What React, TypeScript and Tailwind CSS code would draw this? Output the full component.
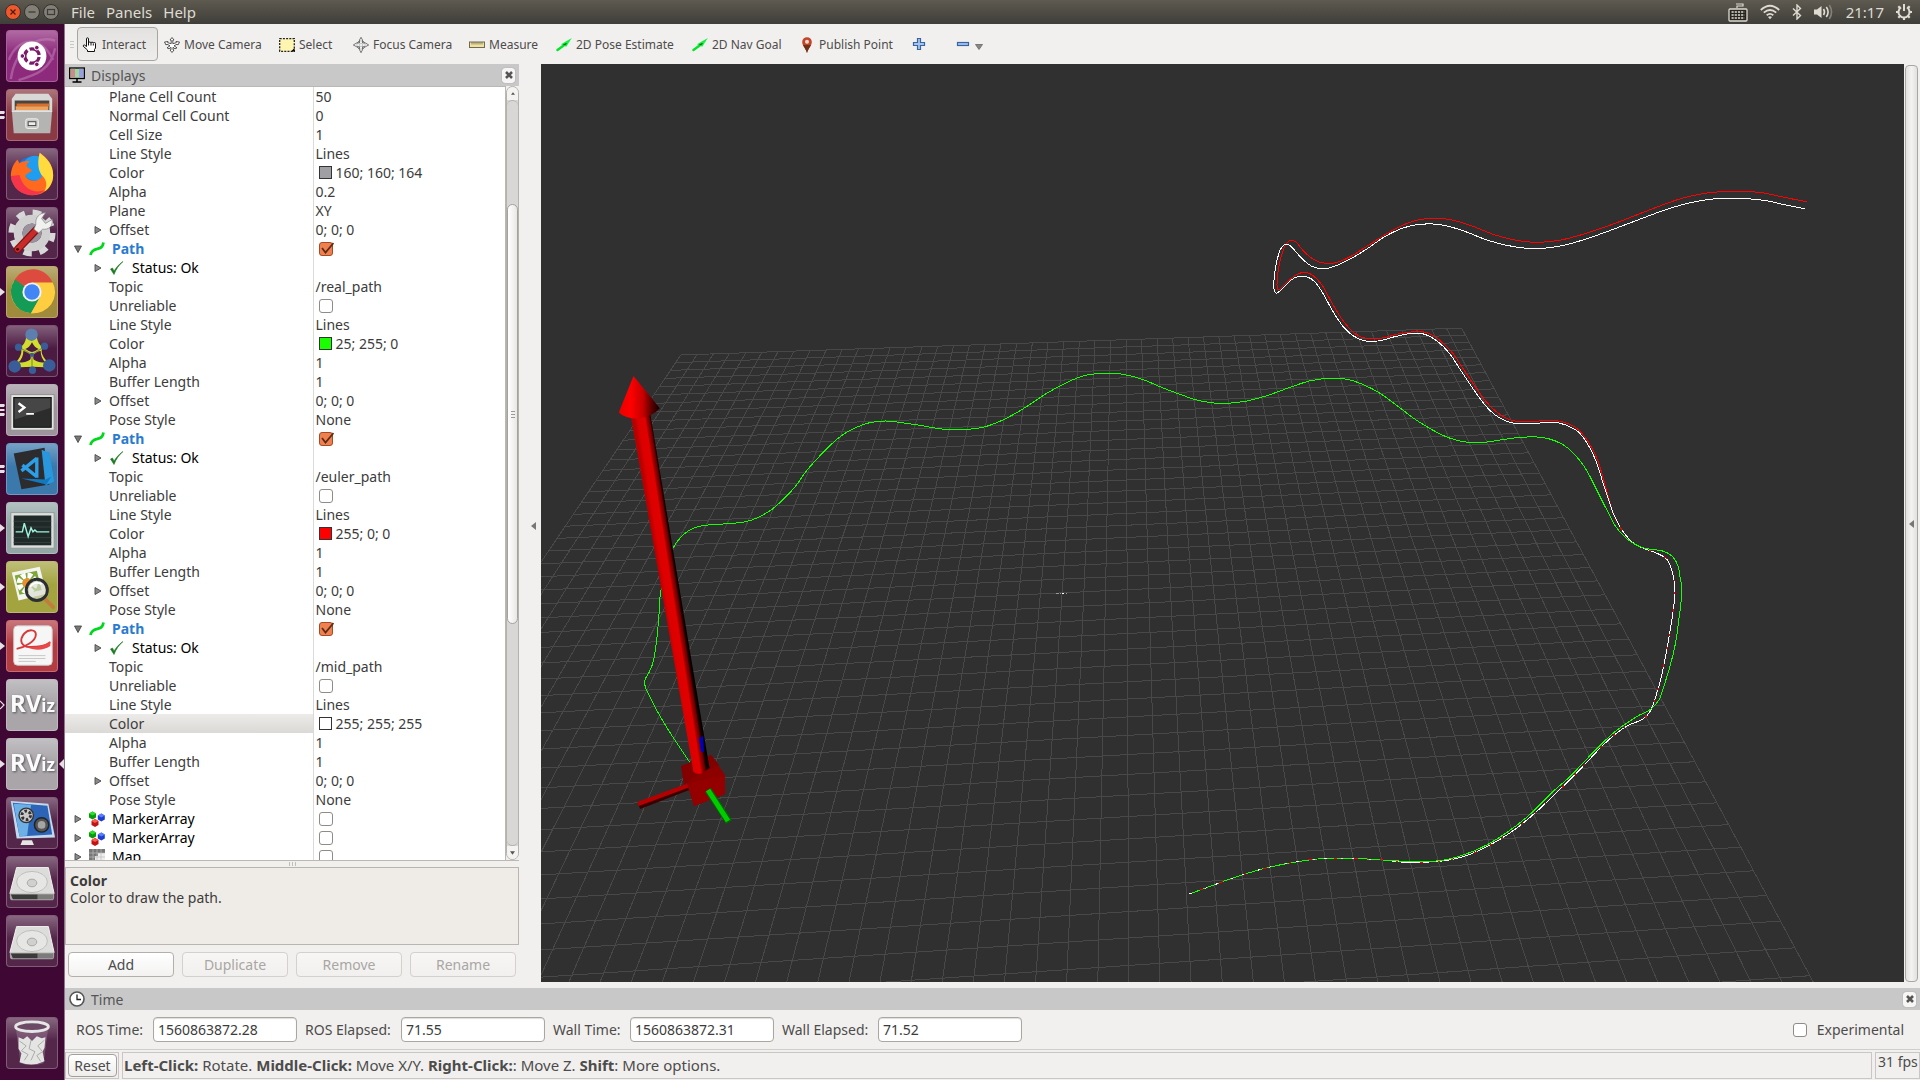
import React, { useId } from "react";

/* ------------------------------------------------------------------ */
/* Launcher artwork                                                     */
/* ------------------------------------------------------------------ */

function DashArt() {
  return (
    <>
      <path d="M4 50C8 20 30 4 50 10M2 30C10 8 34 2 48 30M12 51C30 46 46 40 50 18" stroke="#c287b9" strokeOpacity=".5" strokeWidth="2.5" fill="none" />
      <circle cx="26" cy="26" r="15" fill="#fff" />
      <circle cx="26" cy="26" r="7.5" fill="none" stroke="#7b1c6b" strokeWidth="3.4" strokeDasharray="13.2 2.5" strokeDashoffset="-1.2" />
      <circle cx="16" cy="26" r="2.4" fill="#7b1c6b" stroke="#fff" />
      <circle cx="31" cy="17.3" r="2.4" fill="#7b1c6b" stroke="#fff" />
      <circle cx="31" cy="34.7" r="2.4" fill="#7b1c6b" stroke="#fff" />
    </>
  );
}

function FilesArt() {
  return (
    <>
      <path d="M9 4h34l4 5v12H5V9z" fill="#d8d8d6" />
      <path d="M8 11h36v12H8z" fill="#4a4543" />
      <path d="M10 14h34v3H10z" fill="#d8702a" />
      <path d="M9 17h34v6H9z" fill="#f0a25c" />
      <path d="M5 21h42l-2 24H7z" fill="#b4b4b2" />
      <path d="M5 21h42v2H5z" fill="#e2e2e0" />
      <rect x="19.500" y="30" width="13" height="10" rx="2" fill="#c8c8c6" stroke="#f2f2f2" />
      <rect x="22" y="33" width="8" height="4" fill="#eee" stroke="#444" />
    </>
  );
}

function FirefoxArt() {
  return (
    <>
      <circle cx="26" cy="26" r="18" fill="#1b74d8" />
      <circle cx="29" cy="20" r="13" fill="#1f9df0" />
      <path d="M34 4c7 5 14 12 14 23 0 12-9 21-21 21S5 40 4 28c0-7 3-13 7-17l2 4c3-2 7-3 11-2-4 2-5 5-1 7l3 2c-2 3-6 3-7 6 3 5 11 8 17 1 2-8-4-13-2-25z" fill="#ff6a1f" />
      <path d="M34 4c8 6 14 13 14 23 0 8-4 14-9 17 4-8 1-13-3-17-3-4-5-12-2-23z" fill="#ffdb3d" />
      <path d="M4 28c1 12 11 20 22 20 5 0 10-2 13-5-12 4-23-3-26-16z" fill="#f3245a" fillOpacity=".75" />
    </>
  );
}

function SettingsArt() {
  return (
    <>
      <circle cx="26" cy="26" r="21" fill="none" stroke="#d8d8d8" strokeWidth="7" strokeDasharray="8.500 8" />
      <circle cx="26" cy="26" r="14.500" fill="none" stroke="#d0d0d0" strokeWidth="9" />
      <circle cx="26" cy="26" r="10" fill="#9a929c" />
      <path d="M33 20L11 43" stroke="#7d1414" strokeWidth="8" strokeLinecap="round" />
      <path d="M33 20L11 43" stroke="#c92b2b" strokeWidth="5.500" strokeLinecap="round" />
      <path d="M30 17c-1-7 4-12 10-12l-4 6 4 5 7-4c1 7-4 11-10 10l-4 4-5-4z" fill="#f1f1ef" stroke="#8a8a8a" strokeWidth=".8" />
      <circle cx="11" cy="43" r="1.500" fill="#3c0909" />
    </>
  );
}

function ChromeArt() {
  return (
    <>
      <circle cx="26" cy="26" r="22" fill="#fcc934" />
      <path d="M26 26L7 15A22 22 0 0 1 48 18H28z" fill="#dd4b3e" />
      <path d="M26 26L8.500 13A22 22 0 0 0 25 48L35 31z" fill="#149c57" />
      <path d="M26 16h21.500A22 22 0 0 1 25 48l9.500-17z" fill="#ffcd40" />
      <circle cx="26" cy="26" r="10" fill="#f2f2f2" />
      <circle cx="26" cy="26" r="8" fill="#4285f4" />
    </>
  );
}

function NodesArt() {
  return (
    <>
      <path d="M20 12h11c1 5 3 8 6 10-2 4-1 9 5 15l-2 6c-9-1-18-1-27 0l-3-6c5-6 6-11 4-15 3-2 5-5 6-10z" fill="#d2de2c" />
      <path d="M26 17c-2 4-4 6-7 7 2 1 4 3 7 3s5-2 7-3c-3-1-5-3-7-7zM17 26c0 5-2 9-5 12 5 0 9-1 12-3 1-1 1-4 0-6-2-2-4-3-7-3zM35 26c0 5 2 9 5 12-5 0-9-1-12-3-1-1-1-4 0-6 2-2 4-3 7-3z" fill="#4c1b42" />
      <path d="M14 23l12 7 12-8M26 30v14" stroke="#8b9440" strokeWidth="1.300" fill="none" />
      <g fill="#3a5c98">
        <circle cx="25.500" cy="9" r="6.500" fill="#5d7fae" />
        <circle cx="8" cy="42" r="6.500" />
        <circle cx="44" cy="41" r="6.500" />
        <circle cx="12" cy="22" r="3.800" />
        <circle cx="39" cy="21" r="3.800" />
        <circle cx="26" cy="30" r="2.200" />
        <circle cx="26.500" cy="46" r="3.800" />
      </g>
    </>
  );
}

function TerminalArt() {
  return (
    <>
      <rect x="4" y="10" width="45" height="37" fill="#e4e4e2" stroke="#8f8f8c" />
      <rect x="7" y="13" width="39" height="31" fill="#2c2c2c" stroke="#111" />
      <path d="M8 14h37v10L8 36z" fill="#464646" />
      <path d="M12 19l6 4.500-6 4.500" fill="none" stroke="#fff" strokeWidth="2.500" />
      <path d="M20 30h8" stroke="#fff" strokeWidth="2" />
    </>
  );
}

function CodeArt() {
  return (
    <>
      <path d="M36 7l8 2 5 30-8 4-26-3 21 1z" fill="#1f8ad2" />
      <path d="M7 10l32-6 5 38-29 5z" fill="#2c2c2e" />
      <path d="M36 6l8 3 5 30-9 4z" fill="#2a97dd" />
      <path d="M31 14v21M31 15L15 28M31 34L16 22" stroke="#2c9fe8" strokeWidth="3.500" fill="none" />
      <path d="M15 36l25 1 6-3-5 8z" fill="#1279bf" />
    </>
  );
}

function MonitorArt() {
  return (
    <>
      <rect x="4" y="10" width="45" height="37" fill="#dededc" stroke="#8f9a98" />
      <rect x="7" y="13" width="39" height="31" fill="#1f2a28" />
      <path d="M7 19h39M7 25h39M7 36h39M7 41h39" stroke="#33413e" />
      <path d="M9 30h7l2-9 4 14 3-9 2 4 2-2 2 2h13" fill="none" stroke="#9ff3dd" strokeWidth="1.500" />
    </>
  );
}

function ViewerArt() {
  return (
    <>
      <path d="M5 11l29-6 7 28-29 7z" fill="#f4f4f0" />
      <path d="M8 14l23-5 5 20-23 5z" fill="#7fa83a" />
      <circle cx="21" cy="22" r="8" fill="none" stroke="#fff" strokeWidth="6" strokeDasharray="4.500 1.800" />
      <circle cx="21" cy="22" r="5" fill="#e9902a" />
      <path d="M39 38l9 9" stroke="#c07d3c" strokeWidth="4" strokeLinecap="round" />
      <circle cx="31" cy="29" r="11" fill="#d9dccf" fillOpacity=".65" stroke="#2b2e33" strokeWidth="3" />
      <path d="M24 26c2-4 7-6 12-3" stroke="#fff" strokeWidth="2" fill="none" />
    </>
  );
}

function DocumentArt() {
  return (
    <>
      <rect x="7" y="5" width="40" height="41" rx="4" fill="#f6f6f6" stroke="#ccc" />
      <path d="M10 29c9-2 20-8 20-15 0-5-7-6-12-1-6 7-3 14 6 14 8 0 16-1 21-5" fill="none" stroke="#d83a3a" strokeWidth="2" />
      <path d="M20 27c10 1 18-1 25-6v5c-8 5-16 5-25 1z" fill="#e8484a" />
      <path d="M12 36h28M12 39h28M12 42h18" stroke="#c6c6c6" />
    </>
  );
}

function RvizArt() {
  return (
    <text x="3" y="33" fill="#fbfbfb" className="font-bold [filter:drop-shadow(1px_1px_1px_#555)]">
      <tspan fontSize="25">RV</tspan>
      <tspan fontSize="18">iz</tspan>
    </text>
  );
}

function DisplayArt() {
  return (
    <>
      <path d="M4 3l39 3 7 35-40 1z" fill="#c6d9ec" />
      <path d="M6 5l36 3 5 30-34 2z" fill="#2c64b8" />
      <path d="M7 6l18 1-4 32-8 1z" fill="#6db0e6" />
      <circle cx="20" cy="18" r="7.500" fill="#c9c9c9" stroke="#333" strokeWidth="1.500" />
      <circle cx="20" cy="18" r="4.500" fill="none" stroke="#333" strokeWidth="3" strokeDasharray="2.700 2" />
      <circle cx="36" cy="28" r="7.500" fill="#555" stroke="#222" strokeWidth="1.500" />
      <circle cx="36" cy="28" r="4" fill="#a5a5a5" />
      <path d="M16 44h10l2 5H14z" fill="#e5e5e3" />
    </>
  );
}

function DiskArt() {
  return (
    <>
      <path d="M10 11h33l6 27H3z" fill="#dcdcda" stroke="#f4f4f4" />
      <ellipse cx="26" cy="26" rx="16" ry="11" fill="#e6e6e4" stroke="#bdbdbb" />
      <ellipse cx="26" cy="27" rx="5" ry="4" fill="#d0d0ce" stroke="#a5a5a3" />
      <path d="M3 38h46v4q0 3-3 3H6q-3 0-3-3z" fill="#a5a5a3" />
      <path d="M4 39h28v5H6z" fill="#3a3a3a" />
      <path d="M32 39h16v5H32z" fill="#7b7b79" />
    </>
  );
}

function TrashArt() {
  return (
    <>
      <path d="M9 9h34l-5 38q-12 4-24 0z" fill="#9d8199" fillOpacity=".45" />
      <path d="M12 20l5 2 4-3 5 5 5-5 5 2 4-1-1 11-2 4 2 10q-12 6-26 1l2-9-3-5z" fill="#e4e4e2" />
      <path d="M13 24l7 5-5 5 7 4-4 6M25 23l-2 9 6 3-4 9M39 23l-7 6 5 6-6 4 4 6" stroke="#a9a9a7" fill="none" />
      <ellipse cx="26" cy="9" rx="17" ry="5" fill="#6b4b66" stroke="#e6e6e6" strokeWidth="3" />
    </>
  );
}

type Marks = "none" | "one" | "two" | "three" | "hollow";
const launcher: { name: string; tile: string; art: () => React.JSX.Element; marks: Marks; active?: boolean }[] = [
  { name: "Dash", tile: "bg-[#8e2a7c]", art: DashArt, marks: "none" },
  { name: "Files", tile: "bg-[#8a3a44]", art: FilesArt, marks: "two" },
  { name: "Firefox", tile: "bg-[#54264a]", art: FirefoxArt, marks: "none" },
  { name: "System Settings", tile: "bg-[#54264a]", art: SettingsArt, marks: "none" },
  { name: "Chrome", tile: "bg-[#a08a3c]", art: ChromeArt, marks: "one" },
  { name: "Node Graph", tile: "bg-[#4c1b42]", art: NodesArt, marks: "none" },
  { name: "Terminal", tile: "bg-[#9d949d]", art: TerminalArt, marks: "three" },
  { name: "Code", tile: "bg-[#3b78ac]", art: CodeArt, marks: "two" },
  { name: "System Monitor", tile: "bg-[#93a6a6]", art: MonitorArt, marks: "one" },
  { name: "Image Viewer", tile: "bg-[#a3a440]", art: ViewerArt, marks: "one" },
  { name: "Document Viewer", tile: "bg-[#b23c42]", art: DocumentArt, marks: "one" },
  { name: "RViz", tile: "bg-[#a9a5a9]", art: RvizArt, marks: "hollow" },
  { name: "RViz session", tile: "bg-[#a9a5a9]", art: RvizArt, marks: "one", active: true },
  { name: "Screen Recorder", tile: "bg-[#54264a]", art: DisplayArt, marks: "none" },
  { name: "Disk 1", tile: "bg-[#54264a]", art: DiskArt, marks: "none" },
  { name: "Disk 2", tile: "bg-[#54264a]", art: DiskArt, marks: "none" },
];

function RunMarks({ kind }: { kind: Marks }) {
  if (kind === "none") return null;
  return (
    <svg viewBox="0 0 6 16" className="h-4 w-[6px]" fill="#e6e0e4">
      {kind === "one" && <path d="M0 4l5 4-5 4z" />}
      {kind === "hollow" && <path d="M0 4l4 4-4 4" fill="none" stroke="#e6e0e4" strokeWidth="1.200" />}
      {kind === "two" && <path d="M0 4h4l1 1-1 2H0zM0 9h4l1 1-1 2H0z" />}
      {kind === "three" && <path d="M0 2h4l1 1-1 2H0zM0 7h4l1 1-1 1H0zM0 11h4l1 1-1 2H0z" />}
    </svg>
  );
}

function Tile({ name, tile, Art }: { name: string; tile: string; Art: () => React.JSX.Element }) {
  return (
    <button aria-label={name} className={`size-[52px] shrink-0 overflow-hidden rounded border border-white/25 ${tile}`}>
      <svg viewBox="0 0 52 52" className="block size-full bg-linear-to-b from-white/30 to-transparent to-45%">
        <Art />
      </svg>
    </button>
  );
}

function Launcher() {
  return (
    <nav aria-label="Launcher" className="flex w-[65px] shrink-0 flex-col justify-between border-r border-[#8f7589] bg-[#3f0733] pt-[6px] pb-[6px]">
      <ul className="flex flex-col gap-[7px]">
        {launcher.map(({ name, tile, art, marks, active }) => (
          <li key={name} className="flex h-[52px] items-center">
            <span className="w-[6px] shrink-0">
              <RunMarks kind={marks} />
            </span>
            <Tile name={name} tile={tile} Art={art} />
            <span className="w-[6px] shrink-0">
              {active && (
                <svg viewBox="0 0 6 10" className="h-[10px] w-[6px]">
                  <path d="M6 0v10L1 5z" fill="#e6e0e4" />
                </svg>
              )}
            </span>
          </li>
        ))}
      </ul>
      <div className="pl-[6px]">
        <Tile name="Trash" tile="bg-[#54264a]" Art={TrashArt} />
      </div>
    </nav>
  );
}

/* ------------------------------------------------------------------ */
/* Top bar                                                              */
/* ------------------------------------------------------------------ */

function TopBar() {
  return (
    <header className="flex h-6 shrink-0 items-center justify-between bg-linear-to-b from-[#5e5a50] to-[#3f3e39] pr-2 pl-[5px] text-[15px] leading-6 text-[#dfdbd2]">
      <div className="flex items-center">
        <div className="flex gap-[3px]">
          <button aria-label="Close window" className="size-4">
            <svg viewBox="0 0 16 16">
              <circle cx="8" cy="8" r="7.500" fill="#f0582c" stroke="#35332e" />
              <path d="M5.500 5.500l5 5m0-5l-5 5" stroke="#4b1d10" strokeWidth="1.300" />
            </svg>
          </button>
          <button aria-label="Minimize window" className="size-4">
            <svg viewBox="0 0 16 16">
              <circle cx="8" cy="8" r="7.500" fill="#827f77" stroke="#35332e" />
              <path d="M4.500 8h7" stroke="#3c3b37" strokeWidth="1.300" />
            </svg>
          </button>
          <button aria-label="Restore window" className="size-4">
            <svg viewBox="0 0 16 16">
              <circle cx="8" cy="8" r="7.500" fill="#827f77" stroke="#35332e" />
              <rect x="4.500" y="5.500" width="7" height="5" fill="none" stroke="#3c3b37" strokeWidth="1.200" />
            </svg>
          </button>
        </div>
        <div className="ml-3 flex gap-[11px]">
          <button>File</button>
          <button>Panels</button>
          <button>Help</button>
        </div>
      </div>
      <div className="flex items-center">
        <svg viewBox="0 0 20 20" className="mr-3 size-5">
          <path d="M9 6V4h6V2H8" fill="none" stroke="#dfdbd2" strokeWidth="1.200" />
          <rect x="1" y="7" width="18" height="12" rx="1" fill="#26251f" stroke="#dfdbd2" strokeWidth="1.300" />
          <path d="M3.500 10h13M3.500 13h13M3.500 16h13" stroke="#dfdbd2" strokeWidth="1.700" strokeDasharray="2.200 1" />
        </svg>
        <svg viewBox="0 0 20 16" className="mr-3 h-4 w-5" fill="none" stroke="#dfdbd2" strokeWidth="1.800">
          <path d="M.8 6Q10-2.500 19.200 6M3.800 8.700q6.200-5.500 12.400 0M6.700 11.300q3.300-2.800 6.600 0" />
          <path d="M8 13q2-1.500 4 0l-2 2.200z" fill="#dfdbd2" stroke="none" />
        </svg>
        <svg viewBox="0 0 10 16" className="mr-3 h-4 w-[10px]" fill="none" stroke="#dfdbd2" strokeWidth="1.400">
          <path d="M1 4.500l7.500 7L5 15V1l3.500 3.500L1 11.500" />
        </svg>
        <svg viewBox="0 0 20 16" className="mr-3 h-4 w-5" fill="none" stroke="#dfdbd2" strokeWidth="1.600">
          <path d="M0 5.500h3L7.500 2v12L3 10.500H0z" fill="#dfdbd2" stroke="none" />
          <path d="M9.500 5q2 3 0 6M12.300 3q3.600 5 0 10" />
          <path d="M15.300 1q4.500 7 0 14" stroke="#85827b" />
        </svg>
        <span className="mr-3">21:17</span>
        <svg viewBox="0 0 16 16" className="size-4" fill="none" stroke="#dfdbd2">
          <path d="M11 3.400A5.500 5.500 0 1 1 5 3.400" strokeWidth="2" />
          <path d="M8 0v7" strokeWidth="2" />
          <path d="M8 13.500v2.500M0 8h2.500M13.500 8H16M2.300 2.300l2 2M13.700 2.300l-2 2M2.300 13.700l2-2M13.700 13.700l-2-2" strokeWidth="2.200" />
        </svg>
      </div>
    </header>
  );
}

/* ------------------------------------------------------------------ */
/* Tool bar                                                             */
/* ------------------------------------------------------------------ */

const HandIcon = () => (
  <svg viewBox="0 0 16 16" className="size-4 shrink-0">
    <path d="M4.500 9.500V1.800q0-1 1-1t1 1V6q0-1 1.200-1t1.200 1q0-.8 1.200-.8t1.200.9q0-.6 1.100-.6t1.100 1v4.500l-1 1.500v2H5.500v-1.500L1.200 9.200q0-1.500 1.300-1.200z" fill="#fff" stroke="#111" />
    <path d="M6.500 6v2.500M9 6v2.500M11.300 6.500v2" stroke="#111" />
  </svg>
);
const MoveIcon = () => (
  <svg viewBox="0 0 16 16" className="size-4 shrink-0" fill="#fff" stroke="#444" strokeWidth=".9">
    <path d="M8 .5l2 2.500-1.200.2v3.500l3.500-1-.3-1.200L15.500 5l-1.500 3-1-.8-3 1.600 3 2-2 1-2-1.500v2.500l1 .2-2 2.500-2-2.500 1-.2v-2.500l-2 1.500-2-1 3-2L3 7.200l-1 .8L.5 5 4 4.500l-.3 1.200 3.500 1V3.200L6 3z" />
  </svg>
);
const SelectIcon = () => (
  <svg viewBox="0 0 16 16" className="size-4 shrink-0">
    <rect x=".7" y="1.700" width="14.600" height="12.600" fill="#fdf5b0" stroke="#222" strokeWidth="1.300" strokeDasharray="2 1.200" />
    <path d="M15.500 11v3.500H12z" fill="#000" />
  </svg>
);
const FocusIcon = () => (
  <svg viewBox="0 0 16 16" className="size-4 shrink-0" fill="none" stroke="#666">
    <circle cx="8" cy="8" r="4.200" fill="#ddd" />
    <circle cx="8" cy="8" r="1.500" fill="#fff" />
    <path d="M8 .3L9.500 3v3h3L15.700 8l-3.200 1.700h-3v3L8 15.700l-1.500-3v-3h-3L.3 8l3.200-2h3V3z" strokeWidth=".9" fill="#fff" fillOpacity=".6" />
  </svg>
);
const RulerIcon = () => (
  <svg viewBox="0 0 16 16" className="size-4 shrink-0">
    <rect x=".5" y="5" width="15" height="5.500" fill="#f0e2a0" stroke="#6f6a50" />
    <path d="M3 5v2.500M5 5v2.500M7 5v2.500M9 5v2.500M11 5v2.500M13 5v2.500" stroke="#6f6a50" strokeWidth=".8" />
  </svg>
);
const ArrowIcon = () => (
  <svg viewBox="0 0 16 16" className="size-4 shrink-0">
    <path d="M1.500 13L9 7.500" stroke="#00e52a" strokeWidth="2.400" strokeLinecap="round" />
    <path d="M15.800 1L5 7.200l5.200 2.600z" fill="#0cf53c" />
    <path d="M7.500 8l3-1.500" stroke="#064d10" strokeWidth="1.300" />
  </svg>
);
const PinIcon = () => (
  <svg viewBox="0 0 16 16" className="size-4 shrink-0">
    <path d="M8 16C7 11.500 3.200 9 3.200 5a4.800 4.800 0 0 1 9.600 0C12.800 9 9 11.500 8 16z" fill="#c2452a" />
    <path d="M8 16C7.300 12.500 5 10.500 4 8h8c-1 2.500-3.300 4.500-4 8z" fill="#6d3317" />
    <circle cx="8" cy="4.800" r="2" fill="#f8dcd4" />
  </svg>
);
const PlusIcon = () => (
  <svg viewBox="0 0 16 16" className="size-4 shrink-0">
    <path d="M6.500 2.500h3v4h4v3h-4v4h-3v-4h-4v-3h4z" fill="#a9c3ea" stroke="#3465a4" strokeWidth="1.200" />
  </svg>
);
const MinusIcon = () => (
  <svg viewBox="0 0 16 16" className="size-4 shrink-0">
    <rect x="2.500" y="6.500" width="11" height="3" fill="#a9c3ea" stroke="#3465a4" strokeWidth="1.200" />
  </svg>
);

const tools = [
  { label: "Move Camera", Icon: MoveIcon, width: "min-w-[115px]" },
  { label: "Select", Icon: SelectIcon, width: "min-w-[74px]" },
  { label: "Focus Camera", Icon: FocusIcon, width: "min-w-[116px]" },
  { label: "Measure", Icon: RulerIcon, width: "min-w-[87px]" },
  { label: "2D Pose Estimate", Icon: ArrowIcon, width: "min-w-[136px]" },
  { label: "2D Nav Goal", Icon: ArrowIcon, width: "min-w-[107px]" },
  { label: "Publish Point", Icon: PinIcon, width: "min-w-[112px]" },
];

function ToolBar() {
  return (
    <div role="toolbar" className="flex h-10 shrink-0 items-center bg-[#f2f0ee] pl-[5px] text-[12px] text-[#4c4c4c]">
      <span className="mr-[3px] flex w-1 flex-col gap-[2px]">
        <i className="h-px bg-[#c9c6c3]" />
        <i className="h-px bg-[#c9c6c3]" />
        <i className="h-px bg-[#c9c6c3]" />
      </span>
      <button className="flex h-[34px] min-w-[81px] items-center gap-1 rounded border border-[#a8a4a0] bg-linear-to-b from-[#e4e2e0] to-[#efedeb] px-1 pt-[2px]">
        <HandIcon />
        Interact
      </button>
      {tools.map(({ label, Icon, width }) => (
        <button key={label} className={`flex h-[34px] items-center gap-1 pt-px pl-[6px] ${width}`}>
          <Icon />
          {label}
        </button>
      ))}
      <button aria-label="Add tool" className="flex h-[34px] min-w-11 items-center pl-[6px]">
        <PlusIcon />
      </button>
      <button aria-label="Remove tool" className="flex h-[34px] items-center gap-1 pl-[6px]">
        <MinusIcon />
        <svg viewBox="0 0 8 6" className="mt-[5px] h-[6px] w-2">
          <path d="M.5.5h7L4 5.500z" fill="#888" stroke="#666" strokeWidth=".8" />
        </svg>
      </button>
    </div>
  );
}

/* ------------------------------------------------------------------ */
/* Displays panel                                                       */
/* ------------------------------------------------------------------ */

function PanelClose({ label }: { label: string }) {
  return (
    <button aria-label={label} className="flex h-[15px] w-[13px] items-center justify-center rounded-[3px] bg-[#f7f6f5] shadow-[0_0_1px_#777]">
      <svg viewBox="0 0 8 8" className="size-2">
        <path d="M1 1l6 6M7 1L1 7" stroke="#555" strokeWidth="2.600" />
      </svg>
    </button>
  );
}

type Row = {
  label: string;
  kind?: "property" | "path" | "status" | "marker" | "map";
  value?: string;
  swatch?: string;
  check?: boolean;
  arrow?: boolean;
  selected?: boolean;
};

const pathRows = (topic: string, color: string, swatch: string, selected = false): Row[] => [
  { label: "Path", kind: "path", check: true },
  { label: "Status: Ok", kind: "status" },
  { label: "Topic", value: topic },
  { label: "Unreliable", check: false },
  { label: "Line Style", value: "Lines" },
  { label: "Color", value: color, swatch, selected },
  { label: "Alpha", value: "1" },
  { label: "Buffer Length", value: "1" },
  { label: "Offset", value: "0; 0; 0", arrow: true },
  { label: "Pose Style", value: "None" },
];

const rows: Row[] = [
  { label: "Plane Cell Count", value: "50" },
  { label: "Normal Cell Count", value: "0" },
  { label: "Cell Size", value: "1" },
  { label: "Line Style", value: "Lines" },
  { label: "Color", value: "160; 160; 164", swatch: "bg-[#a0a0a4]" },
  { label: "Alpha", value: "0.2" },
  { label: "Plane", value: "XY" },
  { label: "Offset", value: "0; 0; 0", arrow: true },
  ...pathRows("/real_path", "25; 255; 0", "bg-[#19ff00]"),
  ...pathRows("/euler_path", "255; 0; 0", "bg-[#ff0000]"),
  ...pathRows("/mid_path", "255; 255; 255", "bg-white", true),
  { label: "MarkerArray", kind: "marker", check: false },
  { label: "MarkerArray", kind: "marker", check: false },
  { label: "Map", kind: "map", check: false },
];

const Triangle = ({ open = false }: { open?: boolean }) => (
  <svg viewBox="0 0 8 8" className="size-2 shrink-0">
    <path d={open ? "M.5 1h7L4 7.500z" : "M1 .5v7L7 4z"} fill={open ? "#777" : "#8a8a8a"} stroke="#4a4a4a" strokeWidth=".9" />
  </svg>
);

const Cube = ({ x, y, top, side }: { x: number; y: number; top: string; side: string }) => (
  <>
    <path d={`M${x} ${y}l3.500-2 3.500 2v4l-3.500 2-3.500-2z`} fill={side} />
    <path d={`M${x} ${y}l3.500-2 3.500 2-3.500 2z`} fill={top} />
  </>
);

function RowIcon({ kind }: { kind: Row["kind"] }) {
  if (kind === "path")
    return (
      <svg viewBox="0 0 16 16" className="size-4 shrink-0">
        <path d="M1.500 14C2.500 9.500 5 9 8 8s5.500-1 6.500-6.500" fill="none" stroke="#00d81c" strokeWidth="2.800" />
      </svg>
    );
  if (kind === "status")
    return (
      <svg viewBox="0 0 16 16" className="size-4 shrink-0">
        <path d="M1.500 9l3.500 5.500C7 9 10 5 14 1.500 9.500 4.500 7 8 5 11L3.500 8z" fill="#1d7a22" stroke="#1d7a22" strokeWidth=".6" />
      </svg>
    );
  if (kind === "marker")
    return (
      <svg viewBox="0 0 16 16" className="size-4 shrink-0">
        <Cube x={0} y={2.500} top="#2be02b" side="#0b9a0b" />
        <Cube x={8.800} y={4.500} top="#5d7dff" side="#1c3fd0" />
        <Cube x={2.500} y={10} top="#ff5a4a" side="#c01515" />
      </svg>
    );
  return (
    <svg viewBox="0 0 16 16" className="size-4 shrink-0">
      <path d="M0 0h16v16H0z" fill="#eee" />
      <path d="M0 0h16v4H9v3H6v5H0z" fill="#777" />
      <path d="M4 0v16M8 0v16M12 0v16M0 4h16M0 8h16M0 12h16" stroke="#bbb" strokeWidth=".7" />
    </svg>
  );
}

function TreeCheck({ label, checked }: { label: string; checked: boolean }) {
  return (
    <span className="grid size-4 place-items-center">
      <input
        type="checkbox"
        aria-label={label}
        defaultChecked={checked}
        className="peer col-start-1 row-start-1 size-[14px] appearance-none rounded-[3px] border border-[#8f8b86] bg-white checked:border-[#a34a28] checked:bg-[#f0814f]"
      />
      <svg viewBox="0 0 16 16" className="pointer-events-none col-start-1 row-start-1 hidden size-4 peer-checked:block">
        <path d="M4 7l3.500 4.500L15.500 2" fill="none" stroke="#5c2c1a" strokeWidth="1.800" />
      </svg>
    </span>
  );
}

function TreeRow({ row }: { row: Row }) {
  const kind = row.kind ?? "property";
  const top = kind === "path" || kind === "marker" || kind === "map";
  return (
    <tr className="h-[19px]">
      <td className={`w-[248px] border-r border-[#dcdad8] p-0 ${row.selected ? "bg-linear-to-b from-[#ecebe9] to-[#dad9d6]" : ""}`}>
        <div className={`flex h-[19px] items-center gap-[7px] ${top ? "pl-[9px]" : "pl-[29px]"}`}>
          {top && <Triangle open={kind === "path"} />}
          {!top && (kind === "status" || row.arrow ? <Triangle /> : <span className="w-2" />)}
          {kind !== "property" && <RowIcon kind={kind} />}
          <span className={kind === "path" ? "font-bold text-[#2a7bd0]" : kind === "property" ? "" : "text-black"}>{row.label}</span>
        </div>
      </td>
      <td className="p-0">
        <div className="flex h-[19px] items-center gap-1 pl-[2px]">
          {row.swatch && <span className={`ml-[3px] size-[13px] border border-[#333] ${row.swatch}`} />}
          {row.check !== undefined && (
            <span className="ml-[2px]">
              <TreeCheck label={row.label} checked={row.check} />
            </span>
          )}
          {row.value}
        </div>
      </td>
    </tr>
  );
}

function PanelHeader({ title, children }: { title: string; children: React.ReactNode }) {
  return (
    <div className="flex h-[22px] shrink-0 items-center bg-[#c8c8c8] pr-1 pl-1 text-[14px] text-[#555]">
      {children}
      <h2 className="ml-[6px] flex-1">{title}</h2>
      <PanelClose label={`Close ${title}`} />
    </div>
  );
}

function PanelButton({ label, disabled = false }: { label: string; disabled?: boolean }) {
  return (
    <button
      disabled={disabled}
      className="h-[25px] flex-1 rounded border border-[#b3afaa] bg-linear-to-b from-white to-[#f3f2f1] text-[14px] leading-[22px] text-[#4c4c4c] disabled:border-[#d3d0cd] disabled:from-[#f7f6f5] disabled:to-[#f2f0ee] disabled:text-[#a9a6a3]"
    >
      {label}
    </button>
  );
}

function DisplaysPanel() {
  return (
    <section aria-label="Displays" className="flex w-[454px] shrink-0 flex-col">
      <PanelHeader title="Displays">
        <svg viewBox="0 0 16 16" className="size-4">
          <rect x=".7" y="1" width="14.600" height="10.500" fill="#9fd49f" stroke="#000" strokeWidth="1.300" />
          <path d="M1.500 1.800H6v9H1.500z" fill="#c98c8c" />
          <path d="M10 1.800h4.500v9H10z" fill="#9c9ce0" />
          <path d="M8 11v3.500M3.500 15h9" stroke="#000" strokeWidth="1.500" />
        </svg>
      </PanelHeader>
      <div className="flex min-h-0 flex-1 border-b border-[#bbb7b3]">
        <div className="min-h-0 flex-1 overflow-hidden border-t border-r border-[#bbb7b3] bg-white">
          <table className="w-full border-collapse text-[14px] leading-[19px] text-[#3c3c3c]">
            <tbody>
              {rows.map((row, i) => (
                <TreeRow key={i} row={row} />
              ))}
            </tbody>
          </table>
        </div>
        <div aria-hidden="true" className="flex w-[13px] flex-col rounded-full border border-[#b5b1ad] bg-[#d9d7d5]">
          <span className="flex h-[13px] items-center justify-center rounded-t-full bg-[#f4f3f2]">
            <svg viewBox="0 0 6 4" className="h-[3px] w-1">
              <path d="M0 4l3-4 3 4z" fill="#555" />
            </svg>
          </span>
          <span className="flex-[104_1_0] rounded-t-full border-t border-[#b5b1ad]" />
          <span className="flex flex-[421_1_0] flex-col items-center justify-center gap-[2px] rounded-full border border-[#a5a19d] bg-linear-to-r from-white to-[#e9e7e5]">
            <i className="h-px w-1 bg-[#999]" />
            <i className="h-px w-1 bg-[#999]" />
            <i className="h-px w-1 bg-[#999]" />
          </span>
          <span className="flex-[222_1_0] rounded-b-full border-b border-[#b5b1ad]" />
          <span className="flex h-[13px] items-center justify-center rounded-b-full bg-[#f4f3f2]">
            <svg viewBox="0 0 6 4" className="h-1 w-[5px]">
              <path d="M0 0h6L3 4z" fill="#555" />
            </svg>
          </span>
        </div>
      </div>
      <div className="flex h-[6px] items-center justify-center gap-[2px]">
        <i className="h-1 w-px bg-[#c2bfbb]" />
        <i className="h-1 w-px bg-[#c2bfbb]" />
        <i className="h-1 w-px bg-[#c2bfbb]" />
      </div>
      <div className="h-[78px] border border-[#b9b5b0] bg-[#efebe6] px-1 pt-1 text-[14px] leading-[17px] text-[#3c3c3c]">
        <h3 className="font-bold">Color</h3>
        <p>Color to draw the path.</p>
      </div>
      <div className="mt-[7px] mb-[11px] flex gap-2 px-[3px]">
        <PanelButton label="Add" />
        <PanelButton label="Duplicate" disabled />
        <PanelButton label="Remove" disabled />
        <PanelButton label="Rename" disabled />
      </div>
    </section>
  );
}

/* ------------------------------------------------------------------ */
/* 3D view                                                              */
/* ------------------------------------------------------------------ */

/* Perspective projection of a ground-plane cell corner, counted from the far right corner. */
function project(u: number, m: number): string {
  const w = 2.02948 - 0.02238 * m - 0.001666 * u;
  return `${((2966.3 - 25.14 * m - 32.827 * u) / w).toFixed(1)} ${(1276.7 / w - 301).toFixed(1)}`;
}

const gridPath = Array.from({ length: 51 }, (_, i) => `M${project(0, i)}L${project(50, i)}M${project(i, 0)}L${project(i, 50)}`).join("");

/* Smooth curve through a flat list of x,y pairs. */
function curve(p: number[]): string {
  const n = p.length / 2;
  const at = (i: number) => {
    const k = Math.max(0, Math.min(n - 1, i));
    return [p[2 * k], p[2 * k + 1]];
  };
  let d = `M${p[0]} ${p[1]}`;
  for (let i = 0; i < n - 1; i++) {
    const [a, b, c, e] = [at(i - 1), at(i), at(i + 1), at(i + 2)];
    const c1 = [b[0] + (c[0] - a[0]) / 6, b[1] + (c[1] - a[1]) / 6];
    const c2 = [c[0] - (e[0] - b[0]) / 6, c[1] - (e[1] - b[1]) / 6];
    d += `C${c1.map((v) => v.toFixed(1)).join(" ")} ${c2.map((v) => v.toFixed(1)).join(" ")} ${c[0]} ${c[1]}`;
  }
  return d;
}

const tail = [1382.9, 860, 1359.3, 858.7, 1321.6, 858.7, 1295.6, 862, 1264.9, 868.3, 1236.6, 876.7, 1213, 885.3, 1189.4, 894];

const greenPath = [
  689.4, 761.7, 678.8, 746, 667.3, 728.3, 658.4, 713.3, 651, 699.3, 645.3, 686.7, 644.9, 680, 649.4, 671.7, 653.5, 660.7, 656.3, 643.3,
  658, 626.7, 659.6, 606.7, 660.4, 594, 665, 568, 673.5, 547.3, 680.8, 537.3, 691, 529.3, 705.3, 525.3, 727.8, 523.7, 744.1, 522,
  756.3, 518.3, 770.6, 510.3, 780.8, 501.7, 795.1, 486.7, 806.1, 471.3, 817.6, 458.3, 829.8, 445.7, 842, 435.3, 854.3, 428.3,
  868.6, 423, 884.9, 421, 899.2, 422.3, 919.6, 425.3, 942, 429, 966.5, 429.3, 982.9, 427.3, 1001.2, 420.7, 1021.6, 409.7,
  1046.1, 393.7, 1066.5, 382.7, 1082.9, 376, 1097.1, 373.7, 1113.5, 373.3, 1127.8, 375.3, 1144.1, 380, 1162.4, 387.7, 1180, 394.3,
  1194.3, 399.3, 1210.6, 402.7, 1226.9, 403.3, 1245.3, 401.3, 1265.7, 396, 1288.2, 388, 1310.6, 380.7, 1331, 378.3, 1347.3, 379.3,
  1361.6, 384, 1378, 392, 1396.3, 405, 1414.7, 419, 1433.1, 430.3, 1449.4, 438, 1465.7, 442, 1484.1, 442.3, 1502.4, 439.7,
  1520.8, 437.3, 1541.2, 437.3, 1555.5, 441, 1567.8, 448, 1580, 460.7, 1588.2, 473.3, 1596.3, 489, 1606.5, 509.3, 1614.7, 525,
  1622.9, 535, 1633.1, 543.3, 1645.3, 548.3, 1663.7, 551.3, 1672.7, 556.7, 1678, 566, 1680.4, 579.3, 1681.7, 586.7, 1681.2, 600,
  1678.8, 620, 1675.5, 643.3, 1669.9, 666.7, 1663.7, 686.7, 1659, 700, 1650.5, 709.3, 1637.8, 716, 1623.6, 725.3, 1611.8, 734.3,
  1600, 745.7, 1585.8, 760, 1569.3, 777.3, 1552.8, 791.7, 1529.2, 815, 1510.3, 830, 1486.7, 845, 1463.2, 855, 1439.6, 860.7,
  1406.5, 861.3, ...tail,
];

const mergedStretch = [
  1612.7, 511.7, 1620.8, 528.3, 1631, 541, 1641.2, 547.3, 1655.5, 552.7, 1666.5, 558.7, 1671, 567.7, 1673.9, 579.3, 1674.6, 583.3,
  1674.1, 603.3, 1670.8, 626.7, 1666.1, 653.3, 1661.4, 676.7, 1655.7, 696.7, 1650.5, 710.7, 1642.5, 719.3, 1628.3, 725.3,
  1616.5, 733.3, 1602.4, 745.7, 1581.1, 768.3, 1557.5, 791.7, 1531.6, 816, 1510.3, 832.7, 1486.7, 846.7, 1463.2, 856.7,
  1439.6, 861.3, 1406.5, 862.3, ...tail,
];

const whitePath = [
  1804.5, 208.7, 1784.1, 204.7, 1767.8, 201, 1747.3, 198.7, 1726.9, 198.3, 1706.5, 199.7, 1686.1, 203.7, 1665.7, 209.7,
  1641.2, 218.7, 1616.7, 228, 1588.2, 238.3, 1563.7, 245.3, 1543.3, 248.3, 1526.9, 248.3, 1506.5, 245.3, 1486.1, 239.7,
  1465.7, 231.7, 1447.3, 226, 1433.1, 224, 1416.7, 224.7, 1400.4, 229, 1384.1, 237, 1367.8, 248.3, 1351.4, 258.3, 1337.1, 265.3,
  1324.9, 268.7, 1312.7, 266.7, 1302.4, 259, 1294.3, 250, 1289, 245, 1284.1, 245, 1280, 250.3, 1276.7, 261.7, 1274.3, 276.7,
  1273.9, 288.3, 1276.3, 293.3, 1281.2, 289.7, 1290.2, 280.7, 1297.6, 276.7, 1306.5, 276.7, 1314.7, 281.7, 1322.9, 293.3,
  1333.1, 311.7, 1343.3, 326.7, 1353.5, 336, 1365.7, 341, 1380, 340.7, 1396.3, 336.3, 1412.7, 333.3, 1424.9, 334.3, 1437.1, 341,
  1449.4, 353.3, 1461.6, 371.7, 1473.9, 390, 1484.1, 404, 1494.3, 414.3, 1504.5, 420.3, 1514.7, 423.3, 1535.1, 423.3,
  1553.5, 422.3, 1565.7, 425, 1578, 431.7, 1588.2, 445, 1596.3, 461.7, 1603.7, 485, ...mergedStretch,
];

const redPath = [
  1806.5, 201.7, 1784.1, 197.3, 1763.7, 193, 1743.3, 191.3, 1720.8, 191.7, 1702.4, 193.7, 1682, 198.3, 1661.6, 205.3,
  1633.1, 216.3, 1608.6, 225.7, 1584.1, 234, 1559.6, 240.3, 1537.1, 242.3, 1514.7, 240, 1494.3, 234.7, 1473.9, 226.7,
  1453.5, 220.3, 1435.1, 218.3, 1416.7, 220.3, 1400.4, 226.3, 1384.1, 235.3, 1367.8, 245.7, 1351.4, 256, 1337.1, 262.3,
  1324.9, 263.3, 1312.7, 259, 1302.4, 249.7, 1296.3, 242.3, 1291, 240.3, 1286.1, 244, 1282, 254, 1278.8, 266.7, 1277.1, 281.7,
  1278.4, 290, 1288.2, 281, 1296.3, 274.7, 1305.3, 272.3, 1312.7, 275.3, 1322, 285, 1333.1, 305, 1343.3, 321, 1355.5, 334,
  1367.8, 338.7, 1382, 338, 1398.4, 334, 1414.7, 331.7, 1426.9, 332.7, 1439, 339.7, 1452, 352.3, 1464, 370, 1476, 388,
  1486, 401.5, 1496, 411.5, 1506, 418, 1516, 421.3, 1535, 421.3, 1549, 420.3, 1563, 422, 1577, 428.5, 1589, 443, 1598, 461,
  1605, 485, ...mergedStretch,
];

function Viewport() {
  return (
    <svg
      role="img"
      aria-label="3D view of the three paths"
      viewBox="541 64 1363 918"
      preserveAspectRatio="xMidYMid slice"
      className="block h-full min-w-0 flex-1 bg-[#303030]"
    >
      <defs>
        <linearGradient id="shaft" gradientUnits="userSpaceOnUse" x1="662" y1="594" x2="681" y2="591">
          <stop offset="0" stopColor="#b80000" />
          <stop offset=".2" stopColor="#dd0000" />
          <stop offset=".55" stopColor="#e00000" />
          <stop offset=".62" stopColor="#a80000" />
          <stop offset=".78" stopColor="#6a0000" />
          <stop offset=".86" stopColor="#160000" />
          <stop offset="1" stopColor="#000" />
        </linearGradient>
        <linearGradient id="cone" gradientUnits="userSpaceOnUse" x1="618" y1="0" x2="660" y2="0">
          <stop offset="0" stopColor="#e80000" />
          <stop offset=".3" stopColor="#ff0000" />
          <stop offset=".6" stopColor="#c40000" />
          <stop offset=".8" stopColor="#5a0000" />
          <stop offset="1" stopColor="#100000" />
        </linearGradient>
      </defs>
      <g fill="none" shapeRendering="crispEdges">
        <path d={gridPath} stroke="#484848" />
        <path d={curve(redPath)} stroke="#f00" />
        <path d={curve(whitePath)} stroke="#fff" />
        <path d={curve(mergedStretch)} stroke="#f00" strokeDasharray="2 15 3 22 2 11" />
        <path d={curve(greenPath)} stroke="#19ff00" />
        <path d={curve(tail)} stroke="#fff" strokeDasharray="3 9 2 14" />
        <path d={curve(tail)} stroke="#f00" strokeDasharray="3 22 4 17" />
        <path d="M1056 593.500h3M1060 593.500h1M1066 593.500h1" stroke="#999" />
        <path d="M1062 593.500h2" stroke="#fff" />
      </g>
      <path d="M639 806L688 787" stroke="#3a0000" strokeWidth="6.500" />
      <path d="M638 804L688 785.500" stroke="#b40000" strokeWidth="4.500" />
      <path d="M681 766l30-11 14 20v19l-31 12-6-20z" fill="#8c0000" />
      <path d="M681 766l30-11 8 10-25 12-10 8z" fill="#820000" />
      <path d="M694 782l31-7v19l-31 12-6-20z" fill="#940000" />
      <path d="M631 417L693.500 772q6 4 10 0l6-4L650.500 415z" fill="url(#shaft)" />
      <path d="M699 738l4-2 1 16-3 0z" fill="#00b" />
      <path d="M633.500 376L618.800 412.500q6 6 19 6.200 15-2 22-10.400z" fill="url(#cone)" />
      <path d="M708 790L729 822" stroke="#006a00" strokeWidth="7" />
      <path d="M708 790L728 821" stroke="#00cc00" strokeWidth="5" />
    </svg>
  );
}

/* ------------------------------------------------------------------ */
/* Time panel and status bar                                            */
/* ------------------------------------------------------------------ */

function TimeField({ label, value }: { label: string; value: string }) {
  const id = useId();
  return (
    <>
      <label htmlFor={id} className={label.endsWith("Elapsed:") ? "w-[88px] whitespace-nowrap" : "w-[69px] whitespace-nowrap"}>
        {label}
      </label>
      <input id={id} readOnly defaultValue={value} className="h-[25px] w-36 rounded border border-[#aaa6a0] bg-white px-1 text-[14px] text-[#3c3c3c] shadow-[inset_0_1px_1px_#ddd]" />
    </>
  );
}

function TimePanel() {
  return (
    <section aria-label="Time" className="shrink-0">
      <PanelHeader title="Time">
        <svg viewBox="0 0 16 16" className="size-4">
          <circle cx="8" cy="8" r="7" fill="#fff" stroke="#555" strokeWidth="1.600" />
          <path d="M8 3.500V8.500h4" fill="none" stroke="#222" strokeWidth="1.300" />
        </svg>
      </PanelHeader>
      <div className="flex h-10 items-center gap-2 border-b border-[#d0cdca] pr-4 pl-[11px] text-[14px] text-[#4c4c4c]">
        <TimeField label="ROS Time:" value="1560863872.28" />
        <TimeField label="ROS Elapsed:" value="71.55" />
        <TimeField label="Wall Time:" value="1560863872.31" />
        <TimeField label="Wall Elapsed:" value="71.52" />
        <label className="ml-auto flex items-center gap-[10px]">
          <input type="checkbox" className="size-[14px] appearance-none rounded-[3px] border border-[#8f8b86] bg-white" />
          Experimental
        </label>
      </div>
    </section>
  );
}

function StatusBar() {
  return (
    <footer className="flex h-[30px] shrink-0 items-start gap-[3px] pt-[2px] text-[14px] text-[#4c4c4c]">
      <div className="border border-[#c9c6c3] p-px pl-[2px]">
        <button className="h-[23px] min-w-[49px] rounded border border-[#a39f9a] bg-linear-to-b from-white to-[#eeedeb] px-1 leading-5">Reset</button>
      </div>
      <p className="h-[27px] min-w-0 flex-1 truncate border border-[#c9c6c3] px-px text-[15px] leading-[25px]">
        <b>Left-Click:</b> Rotate. <b>Middle-Click:</b> Move X/Y. <b>Right-Click:</b>: Move Z. <b>Shift</b>: More options.
      </p>
      <p className="h-[27px] w-[45px] border border-[#c9c6c3] pl-[2px] leading-[18px] whitespace-nowrap">31 fps</p>
    </footer>
  );
}

export default function App() {
  return (
    <div className="flex h-screen flex-col overflow-hidden bg-[#f2f0ee] font-['Noto_Sans','Open_Sans',sans-serif]">
      <TopBar />
      <div className="flex min-h-0 flex-1">
        <Launcher />
        <main className="flex min-w-0 flex-1 flex-col">
          <ToolBar />
          <div className="flex min-h-0 flex-1">
            <DisplaysPanel />
            <button aria-label="Collapse left panel" className="flex w-[22px] shrink-0 items-center justify-center pl-[6px]">
              <svg viewBox="0 0 5 8" className="h-2 w-[5px]">
                <path d="M5 0v8L0 4z" fill="#777" />
              </svg>
            </button>
            <div className="mb-[6px] flex min-h-0 min-w-0 flex-1">
              <Viewport />
              <button
                aria-label="Collapse right panel"
                className="mt-px mr-[2px] ml-px flex w-[13px] shrink-0 items-center justify-center rounded border border-[#aaa6a2] bg-linear-to-r from-[#e3e1df] via-[#f3f2f1] to-[#e3e1df]"
              >
                <svg viewBox="0 0 5 8" className="h-2 w-[5px]">
                  <path d="M5 0v8L0 4z" fill="#777" />
                </svg>
              </button>
            </div>
          </div>
          <TimePanel />
          <StatusBar />
        </main>
      </div>
    </div>
  );
}
